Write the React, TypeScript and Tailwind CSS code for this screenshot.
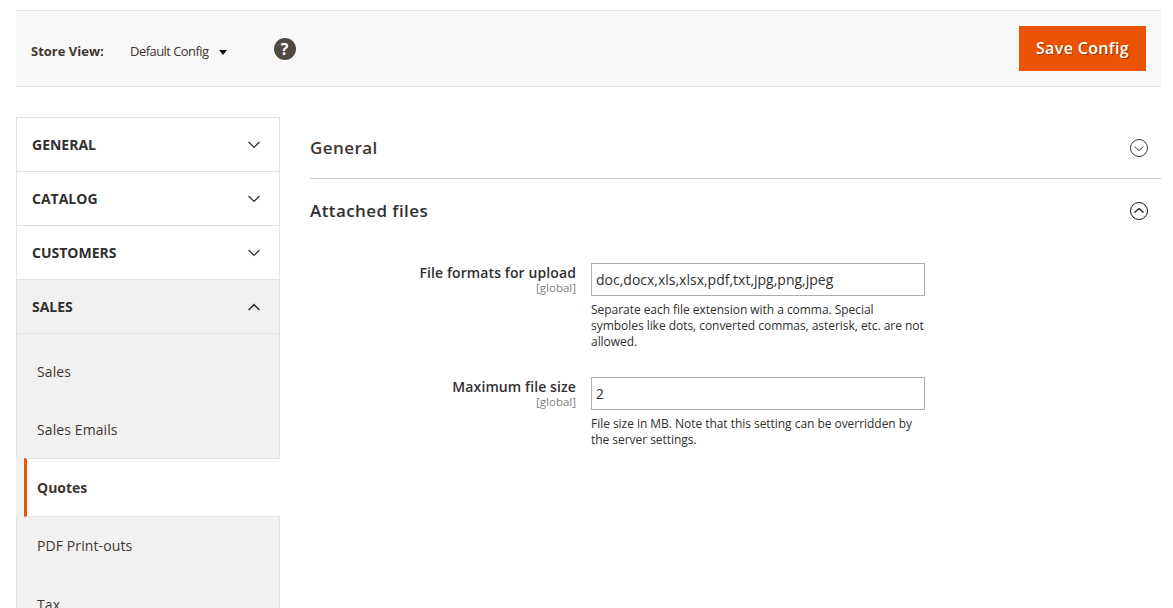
const font = { fontFamily: '"Open Sans", sans-serif' };

function Chevron({ up }: { up?: boolean }) {
  return (
    <svg width="12" height="8" viewBox="0 0 12 8" fill="none" stroke="#303030" strokeWidth={up ? 1.6 : 1.3}>
      <path d={up ? "M0.6 7L6 1.6 11.4 7" : "M0.6 1L6 6.4 11.4 1"} />
    </svg>
  );
}

function CircleChevron({ up, dim }: { up?: boolean; dim?: boolean }) {
  return (
    <svg width="18" height="18" viewBox="0 0 18 18" fill="none" stroke={dim ? "#41362f" : "#111"} strokeWidth="1">
      <circle cx="9" cy="9" r="8.5" />
      <path d={up ? "M4.5 10.5L9 6.5l4.5 4" : "M4.5 7.5L9 11.5l4.5-4"} strokeWidth={up ? 1.3 : 1} />
    </svg>
  );
}

function MainItem({ label, up, active }: { label: string; up?: boolean; active?: boolean }) {
  return (
    <div className={`flex h-[54px] items-center justify-between border-b border-[#e3e3e3] pl-[15px] pr-[19px] ${active ? "bg-[#f1f1f1]" : "bg-white"}`}>
      <span className="text-[14px] font-bold text-[#303030]">{label}</span>
      <Chevron up={up} />
    </div>
  );
}

function SubItem({ label, className }: { label: string; className?: string }) {
  return (
    <div className={`flex h-[58px] items-center pl-[20px] text-[14px] tracking-[0.1px] text-[#41362f] ${className ?? ""}`}>{label}</div>
  );
}

function Field({ label, value, help, className }: { label: string; value: string; help: string[]; className?: string }) {
  return (
    <div className={`flex ${className ?? ""}`}>
      <div className="w-[266px] text-right">
        <div className="text-[14px] leading-[19px] font-semibold tracking-[0.1px] text-[#303030]">{label}</div>
        <div className="text-[11.5px] leading-[12px] text-[#808080]">[global]</div>
      </div>
      <div className="ml-[15px] w-[336px]">
        <div className="flex h-[33px] w-[334px] items-center border border-[#adadad] bg-white pl-[4px] text-[14px] text-[#303030]">{value}</div>
        <div className="mt-[6px] text-[12px] leading-[16px] tracking-[-0.04px] text-[#303030]">
          {help.map((line) => (
            <div key={line} className="whitespace-nowrap">{line}</div>
          ))}
        </div>
      </div>
    </div>
  );
}

export default function App() {
  return (
    <div style={font} className="h-[608px] w-[1173px] overflow-hidden bg-white pl-[16px] pr-[12px] pt-[10px]">
      <div className="flex h-[77px] items-center justify-between border-y border-[#e3e3e3] bg-[#f8f8f8] pl-[15px] pr-[15px]">
        <div className="mt-[6px] flex items-center">
          <span className="w-[99px] text-[13px] font-bold text-[#41362f]">Store View:</span>
          <span className="text-[13px] tracking-[-0.55px] text-[#41362f]">Default Config</span>
          <svg className="ml-[10px] mt-[2px]" width="8" height="5" viewBox="0 0 8 5" fill="#111">
            <path d="M0 0h8L4 5z" />
          </svg>
          <span className="ml-[47px] mb-[5px] flex h-[22px] w-[22px] items-center justify-center rounded-full bg-[#514943] text-[16px] font-bold text-white">?</span>
        </div>
        <div className="flex h-[45px] w-[127px] items-center justify-center bg-[#eb5202] pb-[2px] text-[16px] font-semibold tracking-[0.35px] text-white [text-shadow:1px_1px_0_#a33a00]">
          Save Config
        </div>
      </div>

      <div className="mt-[30px] flex">
        <div className="w-[264px] shrink-0">
          <div className="border-x border-t border-[#e3e3e3]">
            <MainItem label="GENERAL" />
            <MainItem label="CATALOG" />
            <MainItem label="CUSTOMERS" />
            <MainItem label="SALES" up active />
            <div className="bg-[#f1f1f1] pt-[8px]">
              <SubItem label="Sales" />
              <SubItem label="Sales Emails" />
            </div>
          </div>
          <div className="bg-[#f1f1f1] pl-[8px]">
            <div className="flex h-[59px] items-center border-y border-l-[3px] border-[#e3e3e3] border-l-[#eb5202] bg-white pl-[10px] text-[14px] font-bold text-[#41362f]">
              Quotes
            </div>
          </div>
          <div className="border-x border-[#e3e3e3] bg-[#f1f1f1]">
            <SubItem label="PDF Print-outs" className="pb-[2px]" />
            <SubItem label="Tax" />
          </div>
        </div>

        <div className="ml-[30px] flex-1">
          <div className="flex h-[62px] items-center justify-between border-b border-[#cccccc] pr-[13px]">
            <span className="text-[17px] font-semibold tracking-[0.42px] text-[#41362f]">General</span>
            <CircleChevron dim />
          </div>
          <div className="flex h-[64px] items-center justify-between pr-[13px]">
            <span className="text-[17px] font-semibold tracking-[0.42px] text-[#303030]">Attached files</span>
            <CircleChevron up />
          </div>
          <div className="pt-[20px]">
            <Field
              label="File formats for upload"
              value="doc,docx,xls,xlsx,pdf,txt,jpg,png,jpeg"
              help={[
                "Separate each file extension with a comma. Special",
                "symboles like dots, converted commas, asterisk, etc. are not",
                "allowed.",
              ]}
            />
            <Field
              className="mt-[27px]"
              label="Maximum file size"
              value="2"
              help={["File size in MB. Note that this setting can be overridden by", "the server settings."]}
            />
          </div>
        </div>
      </div>
    </div>
  );
}
